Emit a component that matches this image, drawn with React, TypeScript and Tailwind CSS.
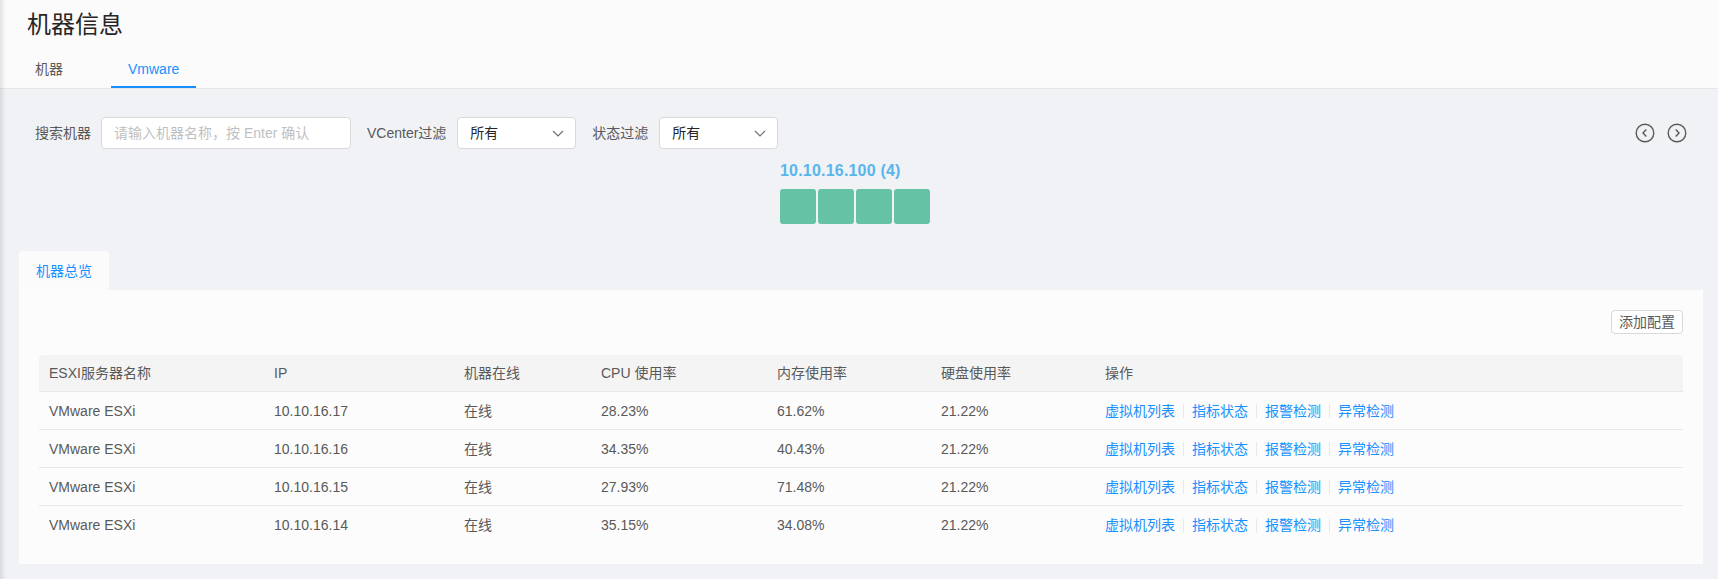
import React from "react";

const FONT = { fontFamily: '"Liberation Sans", "Noto Sans CJK SC", sans-serif' };

interface Host {
  name: string;
  ip: string;
  online: string;
  cpu: string;
  mem: string;
  disk: string;
}

const hosts: Host[] = [
  { name: "VMware ESXi", ip: "10.10.16.17", online: "在线", cpu: "28.23%", mem: "61.62%", disk: "21.22%" },
  { name: "VMware ESXi", ip: "10.10.16.16", online: "在线", cpu: "34.35%", mem: "40.43%", disk: "21.22%" },
  { name: "VMware ESXi", ip: "10.10.16.15", online: "在线", cpu: "27.93%", mem: "71.48%", disk: "21.22%" },
  { name: "VMware ESXi", ip: "10.10.16.14", online: "在线", cpu: "35.15%", mem: "34.08%", disk: "21.22%" },
];

const actions = ["虚拟机列表", "指标状态", "报警检测", "异常检测"];

const cols = "grid grid-cols-[225px_190px_137px_176px_164px_164px_1fr]";

function Chevron() {
  return (
    <svg width="12" height="7" viewBox="0 0 12 7" fill="none">
      <path d="M1 1L6 6L11 1" stroke="#707070" strokeWidth="1.2" />
    </svg>
  );
}

function CircleArrow({ dir }: { dir: "left" | "right" }) {
  return (
    <svg width="20" height="20" viewBox="0 0 20 20" fill="none">
      <circle cx="10" cy="10" r="8.8" stroke="#595959" strokeWidth="1.4" />
      <path
        d={dir === "left" ? "M11.3 6.6L8 10L11.3 13.4" : "M8.7 6.6L12 10L8.7 13.4"}
        stroke="#595959"
        strokeWidth="1.4"
      />
    </svg>
  );
}

function Select() {
  return (
    <div className="w-[119px] h-[32px] bg-white border border-[#d9d9d9] rounded-[4px] flex items-center justify-between pl-[12px] pr-[11px]">
      <span className="text-[14px] text-[#262626]">所有</span>
      <Chevron />
    </div>
  );
}

export default function App() {
  return (
    <div className="relative min-h-[579px] bg-[#f0f2f5]" style={FONT}>
      <div className="absolute left-0 top-0 bottom-0 w-[6px] bg-gradient-to-r from-black/10 to-transparent pointer-events-none" />

      {/* page header */}
      <div className="bg-[#fbfbfb] border-b border-[#e6e6e6] h-[89px] pl-[27px] pt-[9px]">
        <h1 className="text-[24px] leading-[32px] text-[#262626]">机器信息</h1>
        <div className="flex mt-[9px] -ml-[8px] text-[14px]">
          <div className="px-[16px] pt-[8px] pb-[8px] leading-[22px] text-[#595959]">机器</div>
          <div className="ml-[32px] px-[17px] pt-[8px] pb-[6px] leading-[22px] text-[#1890ff] font-medium border-b-2 border-[#1890ff]">
            Vmware
          </div>
        </div>
      </div>

      <div className="pl-[19px] pr-[15px]">
        {/* filters */}
        <div className="flex items-center justify-between px-[16px] pt-[28px] text-[14px]">
          <div className="flex items-center">
            <span className="text-[#595959] mr-[10px]">搜索机器</span>
            <div className="w-[250px] h-[32px] bg-white border border-[#d9d9d9] rounded-[4px] flex items-center pl-[12px]">
              <span className="text-[#bfbfbf]">请输入机器名称，按 Enter 确认</span>
            </div>
            <span className="text-[#595959] ml-[16px] mr-[11px]">VCenter过滤</span>
            <Select />
            <span className="text-[#595959] ml-[16px] mr-[11px]">状态过滤</span>
            <Select />
          </div>
          <div className="flex items-center gap-[12px] -mt-[1px]">
            <CircleArrow dir="left" />
            <CircleArrow dir="right" />
          </div>
        </div>

        {/* cluster */}
        <div className="flex justify-center pr-[10px] mt-[11px]">
          <div className="w-[152px]">
            <div className="text-[16px] leading-[22px] font-bold text-[#58b6ec] tracking-[0.2px]">10.10.16.100 (4)</div>
            <div className="flex gap-[2px] mt-[7px]">
              {[0, 1, 2, 3].map((i) => (
                <div key={i} className="w-[36px] h-[35px] rounded-[3px] bg-[#66c2a5]" />
              ))}
            </div>
          </div>
        </div>

        {/* overview tab */}
        <div className="mt-[27px] flex">
          <div className="h-[39px] px-[17px] pt-[2px] flex items-center rounded-t-[4px] bg-[#fbfbfb] text-[14px] text-[#1890ff]">
            机器总览
          </div>
        </div>
        <div className="bg-[#fcfcfc] p-[20px]">
          <div className="flex justify-end">
            <button className="h-[24px] px-[7px] bg-white border border-[#d9d9d9] rounded-[4px] text-[14px] text-[#595959]">
              添加配置
            </button>
          </div>
          <div className="mt-[21px] text-[14px] text-[#595959]">
            <div className={`${cols} h-[37px] items-center bg-[#f4f4f4] border-b border-[#e8e8e8] rounded-t-[4px]`}>
              {["ESXI服务器名称", "IP", "机器在线", "CPU 使用率", "内存使用率", "硬盘使用率", "操作"].map((h) => (
                <div key={h} className="px-[10px]">
                  {h}
                </div>
              ))}
            </div>
            {hosts.map((h, idx) => (
              <div
                key={h.ip}
                className={`${cols} h-[38px] items-center pt-[1px] ${idx < hosts.length - 1 ? "border-b border-[#e8e8e8]" : ""}`}
              >
                <div className="px-[10px]">{h.name}</div>
                <div className="px-[10px]">{h.ip}</div>
                <div className="px-[10px]">{h.online}</div>
                <div className="px-[10px]">{h.cpu}</div>
                <div className="px-[10px]">{h.mem}</div>
                <div className="px-[10px]">{h.disk}</div>
                <div className="px-[10px] flex items-center">
                  {actions.map((a, i) => (
                    <React.Fragment key={a}>
                      {i > 0 && <span className="mx-[8px] w-px h-[14px] bg-[#e8e8e8]" />}
                      <a className="text-[#1890ff] cursor-pointer">{a}</a>
                    </React.Fragment>
                  ))}
                </div>
              </div>
            ))}
          </div>
        </div>
      </div>
    </div>
  );
}
